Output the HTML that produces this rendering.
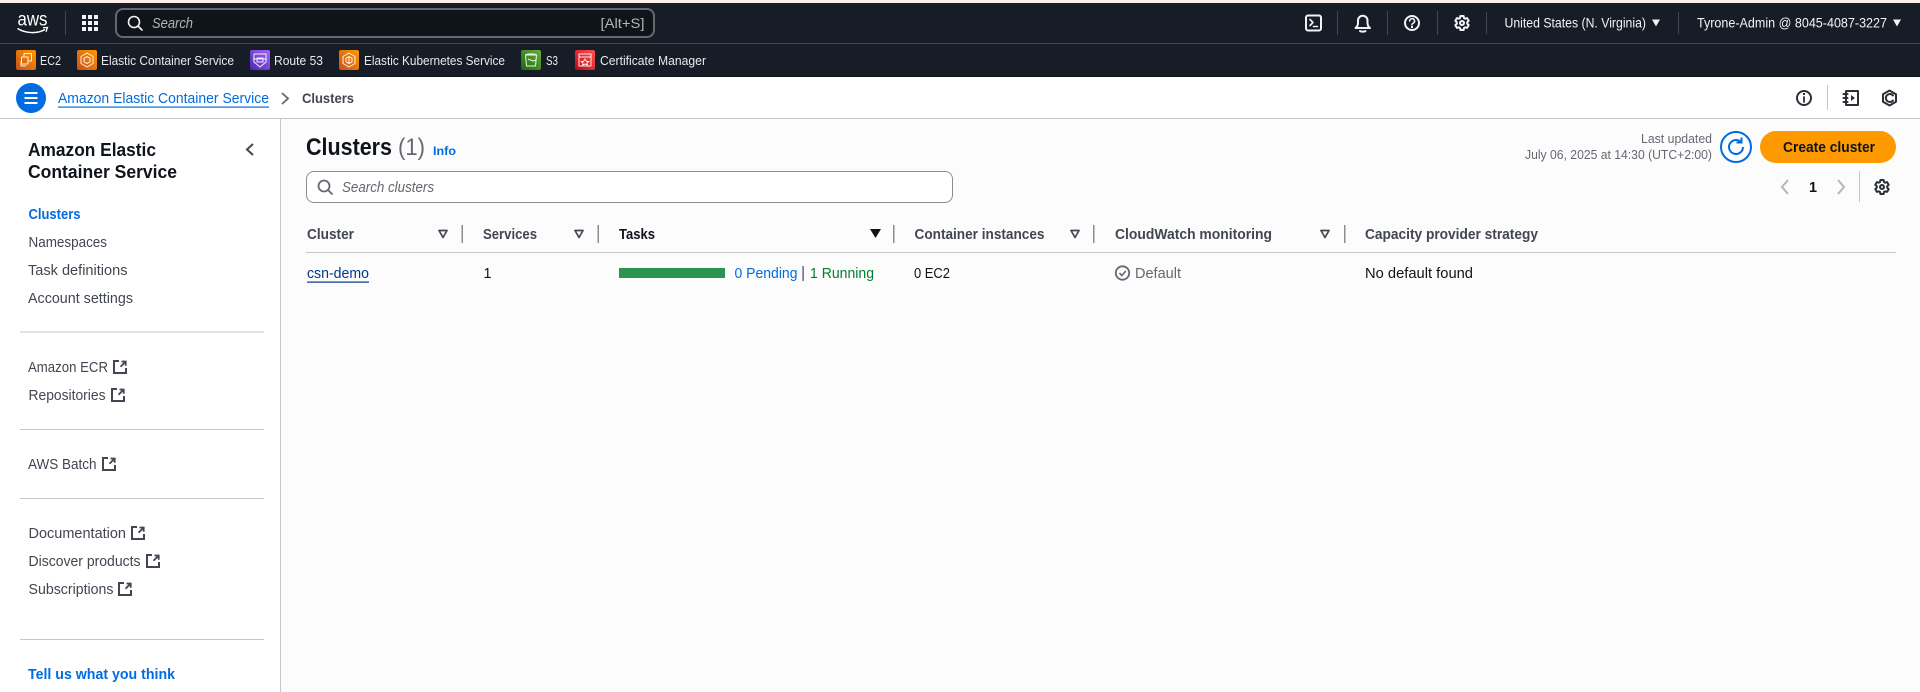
<!DOCTYPE html>
<html lang="en"><head><meta charset="utf-8"><title>Clusters</title>
<style>
html,body{margin:0;padding:0;width:1920px;height:692px;overflow:hidden;background:#fff}
svg{display:block;position:absolute;left:0;top:0}
text{font-family:"Liberation Sans",sans-serif;font-size:14.5px;fill:#424650}
.n{fill:#f3f3f7;font-size:13.5px}
.s{fill:#e8eaee;font-size:13px;font-weight:400}
.b{font-weight:700}
.d{fill:#0f141a}
.bl{fill:#006ce0}
.i{stroke:#424650;fill:none;stroke-width:2;stroke-linecap:round;stroke-linejoin:round}
.w{stroke:#f3f3f7;fill:none;stroke-width:2;stroke-linecap:round;stroke-linejoin:round}
.g{stroke:#fff;fill:none;stroke-width:1;opacity:.9;stroke-linejoin:round}
</style></head><body>
<svg width="1920" height="692" viewBox="0 0 1920 692" xmlns="http://www.w3.org/2000/svg">
<defs>
<linearGradient id="o" x1="0" y1="1" x2="1" y2="0"><stop offset="0" stop-color="#c8511b"/><stop offset="1" stop-color="#ff9900"/></linearGradient>
<linearGradient id="p" x1="0" y1="1" x2="1" y2="0"><stop offset="0" stop-color="#4d27a8"/><stop offset="1" stop-color="#a166ff"/></linearGradient>
<linearGradient id="gr" x1="0" y1="1" x2="1" y2="0"><stop offset="0" stop-color="#1b660f"/><stop offset="1" stop-color="#6cae3e"/></linearGradient>
<linearGradient id="r" x1="0" y1="1" x2="1" y2="0"><stop offset="0" stop-color="#bd0816"/><stop offset="1" stop-color="#ff5252"/></linearGradient>
<symbol id="ext" viewBox="0 0 14 14" overflow="visible"><path d="M6 1H1v12h12V8" fill="none" stroke="#424650" stroke-width="2"/><path d="M8.500 1.500h4.200v4.200M12.300 1.900L7.500 6.700" fill="none" stroke="#424650" stroke-width="1.800"/></symbol>
<symbol id="fl" viewBox="0 0 10 9"><path d="M1 1h8L5 8z" fill="none" stroke="#424650" stroke-width="1.700" stroke-linejoin="round"/></symbol>
<symbol id="gear" viewBox="0 0 16 16" overflow="visible"><path d="M6.400 1h3.200l.4 2 1.100.7 2-.6 1.600 2.800-1.500 1.300v1.600l1.500 1.300-1.600 2.800-2-.6-1.100.7-.4 2H6.400l-.4-2-1.100-.7-2 .6-1.600-2.800L2.800 8.800V7.200L1.300 5.900l1.600-2.800 2 .6L6 3z" fill="none" stroke-width="2" stroke-linejoin="round"/><circle cx="8" cy="8" r="2" fill="none" stroke-width="2"/></symbol>
</defs>

<!-- top strip + nav -->
<rect width="1920" height="3" fill="#fdeee9"/>
<rect y="3" width="1920" height="74" fill="#161d26"/>
<rect y="43" width="1920" height="1" fill="#424650"/>
<rect y="76" width="1920" height="1" fill="#0f141a"/>

<!-- aws logo -->
<text x="17.500" y="25.500" textLength="30" lengthAdjust="spacingAndGlyphs" style="font-size:19px;fill:#fff">aws</text>
<path d="M17.500 28.500c8 5 20 5.500 27.500 1" fill="none" stroke="#fff" stroke-width="1.500"/>
<path d="M43 27.800l4.500-.3-1.500 4.300" fill="none" stroke="#fff" stroke-width="1.300"/>
<rect x="65" y="11" width="1" height="24" fill="#424650"/>
<!-- grid -->
<g fill="#f3f3f7"><rect x="82" y="15" width="4" height="4"/><rect x="88" y="15" width="4" height="4"/><rect x="94" y="15" width="4" height="4"/><rect x="82" y="21" width="4" height="4"/><rect x="88" y="21" width="4" height="4"/><rect x="94" y="21" width="4" height="4"/><rect x="82" y="27" width="4" height="4"/><rect x="88" y="27" width="4" height="4"/><rect x="94" y="27" width="4" height="4"/></g>
<!-- search -->
<rect x="116" y="9" width="538" height="28" rx="7" fill="#0f141a" stroke="#656871" stroke-width="2"/>
<circle cx="134" cy="22" r="5.500" class="w" style="stroke-width:1.600"/><path d="M138 26l4 4" class="w" style="stroke-width:1.600"/>
<text x="152" y="28" textLength="41" lengthAdjust="spacingAndGlyphs" style="font-style:italic;fill:#b4b4bb">Search</text>
<text x="600.500" y="28" textLength="44" lengthAdjust="spacingAndGlyphs" style="fill:#b4b4bb;font-size:14px">[Alt+S]</text>

<!-- nav right -->
<rect x="1306" y="15.500" width="15" height="15" rx="2" class="w"/><path d="M1310 19.500l3 3-3 3M1313.500 26.500h4" class="w" style="stroke-width:1.600"/>
<rect x="1337" y="11" width="1" height="24" fill="#424650"/>
<path d="M1355.500 28c2-1.500 2.500-3 2.500-5v-2.500a4.500 4.500 0 0 1 9.500 0V23c0 2 .5 3.500 2.500 5zM1360 31c1 .9 4.500.9 5.500 0" class="w"/>
<rect x="1387" y="11" width="1" height="24" fill="#424650"/>
<circle cx="1412" cy="23" r="7" class="w"/><path d="M1409.700 21a2.400 2.400 0 1 1 3.400 2.200c-.7.400-1.100.8-1.100 1.600" class="w" style="stroke-width:1.600"/><rect x="1411" y="26" width="2" height="2" fill="#f3f3f7"/>
<use href="#gear" x="1454" y="15" width="16" height="16" stroke="#f3f3f7"/>
<rect x="1437" y="11" width="1" height="24" fill="#424650"/>
<rect x="1486" y="12" width="1" height="22" fill="#424650"/>
<text class="n" x="1504.500" y="27.500" textLength="141.500" lengthAdjust="spacingAndGlyphs">United States (N. Virginia)</text>
<path d="M1652 19.500h8l-4 7z" fill="#f3f3f7"/>
<rect x="1678" y="12" width="1" height="22" fill="#424650"/>
<text class="n" x="1697" y="27.500" textLength="190" lengthAdjust="spacingAndGlyphs">Tyrone-Admin @ 8045-4087-3227</text>
<path d="M1893 19.500h8l-4 7z" fill="#f3f3f7"/>

<!-- services bar -->
<rect x="16" y="50" width="20" height="20" rx="2" fill="url(#o)"/>
<path class="g" d="M24 57v-3.500h7.500v7.500H28M21.500 57H28v7h-6.500zM21 61v5h5" />
<text class="s" x="40" y="64.800" textLength="21" lengthAdjust="spacingAndGlyphs">EC2</text>
<rect x="77" y="50" width="20" height="20" rx="2" fill="url(#o)"/>
<path class="g" d="M87 53l6 3.500v7L87 67l-6-3.500v-7zM87 56.500l3 1.800v3.500l-3 1.800-3-1.800v-3.500z"/>
<text class="s" x="101" y="64.800" textLength="133" lengthAdjust="spacingAndGlyphs">Elastic Container Service</text>
<rect x="250" y="50" width="20" height="20" rx="2" fill="url(#p)"/>
<path class="g" d="M254 54h12v8l-6 5-6-5zM257 58h6v4h-6zM253 59h14"/>
<text class="s" x="274" y="64.800" textLength="49" lengthAdjust="spacingAndGlyphs">Route 53</text>
<rect x="339" y="50" width="20" height="20" rx="2" fill="url(#o)"/>
<path class="g" d="M349 53l6 3.500v7L349 67l-6-3.500v-7zM349 56.500l3 1.800v3.500l-3 1.800-3-1.800v-3.500zM349 56.500v7"/>
<text class="s" x="364" y="64.800" textLength="141" lengthAdjust="spacingAndGlyphs">Elastic Kubernetes Service</text>
<rect x="521" y="50" width="20" height="20" rx="2" fill="url(#gr)"/>
<path class="g" d="M525.500 55h11l-1 11h-9zM525.500 55c1-1.500 10-1.500 11 0M528 59l5 2 3-1"/>
<text class="s" x="546" y="64.800" textLength="12" lengthAdjust="spacingAndGlyphs">S3</text>
<rect x="575" y="50" width="20" height="20" rx="2" fill="url(#r)"/>
<path class="g" d="M579 54h12v12h-12zM579 57h12M585 59l1.500 2.500H589l-2 1.500.5 2-2.500-1-2.500 1 .5-2-2-1.500h2.500z"/>
<text class="s" x="600" y="64.800" textLength="106" lengthAdjust="spacingAndGlyphs">Certificate Manager</text>

<!-- breadcrumb bar -->
<rect y="77" width="1920" height="41" fill="#fff"/>
<rect y="118" width="1920" height="1" fill="#c6c6cd"/>
<circle cx="31" cy="98" r="15" fill="#006ce0"/>
<path d="M24.500 93h13M24.500 98h13M24.500 103h13" stroke="#fff" stroke-width="2"/>
<text class="bl" x="58" y="103" textLength="211" lengthAdjust="spacingAndGlyphs">Amazon Elastic Container Service</text>
<rect x="58" y="106.500" width="211" height="1.200" fill="#006ce0"/>
<path d="M282 93l6 5.500-6 5.500" fill="none" stroke="#656871" stroke-width="1.800"/>
<text class="b" x="302" y="103" textLength="52" lengthAdjust="spacingAndGlyphs" style="fill:#424650;font-size:14px">Clusters</text>
<circle cx="1804" cy="98" r="7" class="i" style="stroke:#2b3038"/><path d="M1804 97v5" class="i" style="stroke-width:1.800;stroke:#2b3038"/><rect x="1803" y="93" width="2" height="2" fill="#2b3038"/>
<rect x="1827" y="85" width="1" height="25" fill="#c6c6cd"/>
<path d="M1846 91h12v14h-12zM1843.500 94h4M1843.500 98h4M1843.500 102h4" class="i" style="stroke:#2b3038"/><path d="M1851 95l4 3-4 3z" fill="#2b3038"/>
<path d="M1889.500 90.500l6.500 3.700v7.600l-6.500 3.700-6.500-3.700v-7.600z" class="i" style="stroke:#2b3038"/><path d="M1893 95.500a4 4 0 1 0 0 5" class="i" style="stroke:#2b3038"/>

<!-- sidebar -->
<rect y="119" width="280" height="573" fill="#fff"/>
<rect x="280" y="119" width="1" height="573" fill="#c6c6cd"/>
<rect x="281" y="119" width="1639" height="573" fill="#fcfcfd"/>
<text class="b d" x="28" y="156" textLength="128" lengthAdjust="spacingAndGlyphs" style="font-size:18px">Amazon Elastic</text>
<text class="b d" x="28" y="178" textLength="149" lengthAdjust="spacingAndGlyphs" style="font-size:18px">Container Service</text>
<path d="M253 144l-6 5.500 6 5.500" fill="none" stroke="#424650" stroke-width="2"/>
<text class="b bl" x="28.500" y="219" textLength="52" lengthAdjust="spacingAndGlyphs">Clusters</text>
<text x="28.500" y="247" textLength="78.500" lengthAdjust="spacingAndGlyphs">Namespaces</text>
<text x="28" y="275" textLength="99.500" lengthAdjust="spacingAndGlyphs">Task definitions</text>
<text x="28" y="303" textLength="105" lengthAdjust="spacingAndGlyphs">Account settings</text>
<rect x="20" y="331.500" width="244" height="1" fill="#c6c6cd"/>
<text x="28" y="372" textLength="80" lengthAdjust="spacingAndGlyphs">Amazon ECR</text>
<use href="#ext" x="113" y="360" width="14" height="14"/>
<text x="28.500" y="400" textLength="77" lengthAdjust="spacingAndGlyphs">Repositories</text>
<use href="#ext" x="111" y="388" width="14" height="14"/>
<rect x="20" y="429" width="244" height="1" fill="#c6c6cd"/>
<text x="28" y="469" textLength="68.500" lengthAdjust="spacingAndGlyphs">AWS Batch</text>
<use href="#ext" x="102" y="457" width="14" height="14"/>
<rect x="20" y="498" width="244" height="1" fill="#c6c6cd"/>
<text x="28.500" y="538" textLength="97.500" lengthAdjust="spacingAndGlyphs">Documentation</text>
<use href="#ext" x="131" y="526" width="14" height="14"/>
<text x="28.500" y="566" textLength="112" lengthAdjust="spacingAndGlyphs">Discover products</text>
<use href="#ext" x="146" y="554" width="14" height="14"/>
<text x="28.500" y="594" textLength="85" lengthAdjust="spacingAndGlyphs">Subscriptions</text>
<use href="#ext" x="118" y="582" width="14" height="14"/>
<rect x="20" y="639" width="244" height="1" fill="#c6c6cd"/>
<text class="b bl" x="28" y="679" textLength="147" lengthAdjust="spacingAndGlyphs">Tell us what you think</text>

<!-- header -->
<text class="b d" x="306" y="155" textLength="86" lengthAdjust="spacingAndGlyphs" style="font-size:24px">Clusters</text>
<text x="398" y="155" textLength="27" lengthAdjust="spacingAndGlyphs" style="font-size:24px;fill:#656871">(1)</text>
<text class="b bl" x="433" y="155" textLength="23" lengthAdjust="spacingAndGlyphs" style="font-size:12px">Info</text>
<text x="1641" y="143" textLength="71" lengthAdjust="spacingAndGlyphs" style="font-size:12.500px;fill:#656871">Last updated</text>
<text x="1525" y="159" textLength="187" lengthAdjust="spacingAndGlyphs" style="font-size:12.500px;fill:#656871">July 06, 2025 at 14:30 (UTC+2:00)</text>
<circle cx="1736" cy="147" r="15" fill="#fff" stroke="#006ce0" stroke-width="2"/>
<path d="M1743 147a7 7 0 1 1-2.200-5.100" fill="none" stroke="#006ce0" stroke-width="2"/><path d="M1741.500 137.500v5h-5" fill="none" stroke="#006ce0" stroke-width="2"/>
<rect x="1760" y="131" width="136" height="32" rx="16" fill="#ff9900"/>
<text class="b d" x="1783" y="152" textLength="92" lengthAdjust="spacingAndGlyphs">Create cluster</text>

<!-- search clusters -->
<rect x="306.500" y="171.500" width="646" height="31" rx="7.500" fill="#fff" stroke="#8c8c94"/>
<circle cx="324" cy="186" r="5.500" class="i" style="stroke:#656871;stroke-width:1.800"/><path d="M328 190l4 4" class="i" style="stroke:#656871;stroke-width:1.800"/>
<text x="342" y="192" textLength="92" lengthAdjust="spacingAndGlyphs" style="font-style:italic;fill:#656871">Search clusters</text>

<!-- pagination -->
<path d="M1788 180l-6 7 6 7" fill="none" stroke="#b4b4bb" stroke-width="2"/>
<text class="b" x="1809" y="192" textLength="8" lengthAdjust="spacingAndGlyphs" style="fill:#0f141a">1</text>
<path d="M1838 180l6 7-6 7" fill="none" stroke="#b4b4bb" stroke-width="2"/>
<rect x="1859" y="171" width="1" height="31" fill="#c6c6cd"/>
<use href="#gear" x="1874" y="179" width="16" height="16" stroke="#2b3038"/>

<!-- table head -->
<g style="font-weight:700">
<text class="b" x="307" y="239" textLength="47" lengthAdjust="spacingAndGlyphs">Cluster</text>
<text class="b" x="483" y="239" textLength="54" lengthAdjust="spacingAndGlyphs">Services</text>
<text class="b d" x="619" y="239" textLength="36" lengthAdjust="spacingAndGlyphs">Tasks</text>
<text class="b" x="914.500" y="239" textLength="130" lengthAdjust="spacingAndGlyphs">Container instances</text>
<text class="b" x="1115" y="239" textLength="157" lengthAdjust="spacingAndGlyphs">CloudWatch monitoring</text>
<text class="b" x="1365" y="239" textLength="173" lengthAdjust="spacingAndGlyphs">Capacity provider strategy</text>
</g>
<use href="#fl" x="438" y="229.500" width="10" height="9"/>
<use href="#fl" x="574" y="229.500" width="10" height="9"/>
<path d="M870 229h11l-5.500 9z" fill="#0f141a"/>
<use href="#fl" x="1070" y="229.500" width="10" height="9"/>
<use href="#fl" x="1320" y="229.500" width="10" height="9"/>
<g fill="#8c8c94"><rect x="461.500" y="225" width="1.500" height="18"/><rect x="597.500" y="225" width="1.500" height="18"/><rect x="893" y="225" width="1.500" height="18"/><rect x="1093" y="225" width="1.500" height="18"/><rect x="1344" y="225" width="1.500" height="18"/></g>
<rect x="306" y="252" width="1590" height="1" fill="#c6c6cd"/>

<!-- table row -->
<text style="fill:#00368a" x="307" y="278" textLength="62" lengthAdjust="spacingAndGlyphs">csn-demo</text>
<rect x="307" y="281.500" width="62" height="1.200" fill="#00368a"/>
<text class="d" x="483.500" y="278" textLength="8" lengthAdjust="spacingAndGlyphs">1</text>
<rect x="619" y="268" width="106" height="10" fill="#2a9350"/>
<text class="bl" x="734.500" y="278" textLength="63" lengthAdjust="spacingAndGlyphs">0 Pending</text>
<rect x="802.500" y="266" width="1.200" height="15" fill="#424650"/>
<text style="fill:#00802f" x="810" y="278" textLength="64" lengthAdjust="spacingAndGlyphs">1 Running</text>
<text class="d" x="914" y="278" textLength="36" lengthAdjust="spacingAndGlyphs">0 EC2</text>
<circle cx="1122.500" cy="273" r="6.700" fill="none" stroke="#656871" stroke-width="1.800"/><path d="M1119.500 273l2.300 2.500 4-4.500" fill="none" stroke="#656871" stroke-width="1.600"/>
<text x="1135" y="278" textLength="46" lengthAdjust="spacingAndGlyphs" style="fill:#656871">Default</text>
<text class="d" x="1365" y="278" textLength="108" lengthAdjust="spacingAndGlyphs">No default found</text>
</svg>
</body></html>
